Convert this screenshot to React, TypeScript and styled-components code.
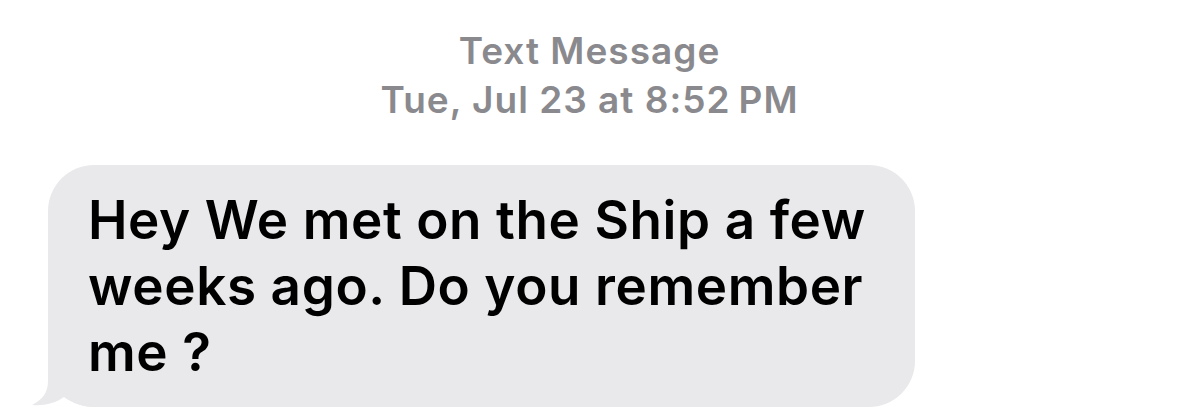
import React from "react"
import styled, { createGlobalStyle } from "styled-components"

const GlobalStyle = createGlobalStyle`
  html, body {
    margin: 0;
    padding: 0;
    background: #ffffff;
  }
  body {
    font-family: Inter, "Noto Sans", "Liberation Sans", sans-serif;
    -webkit-font-smoothing: antialiased;
  }
`

const Screen = styled.div`
  width: 1179px;
  height: 419px;
  overflow: hidden;
  display: flex;
  flex-direction: column;
`

const Header = styled.div`
  display: flex;
  flex-direction: column;
  align-items: center;
  padding-top: 26px;
  color: #8a8a8e;
  font-weight: 600;
  font-size: 37px;
  line-height: 49px;
  letter-spacing: 1px;
`

const HeaderLine = styled.div`
  white-space: nowrap;
`

const Time = styled.span`
  margin-left: 8px;
`

const Row = styled.div`
  display: flex;
  padding: 41px 0 0 48px;
`

const Bubble = styled.div`
  position: relative;
  width: 867px;
  box-sizing: border-box;
  background: #e9e9eb;
  border-radius: 46px;
  padding: 22px 40px 22px 40px;
  color: #000;
  font-weight: 600;
  font-size: 53px;
  line-height: 66px;
  letter-spacing: 0.6px;
`

const Message = styled.span`
  position: relative;
`

const Tail = styled.svg`
  position: absolute;
  left: -20px;
  bottom: 0;
`

const BubbleTail = () => (
  <Tail width="70" height="52" viewBox="0 0 70 52">
    <path
      d="M20 0 L20 26 C20 38 14 45 4 50 C16 51 28 48 36 42 C44 48 54 52 70 52 L70 0 Z"
      fill="#e9e9eb"
    />
  </Tail>
)

const App = () => {
  return (
    <Screen>
      <GlobalStyle />
      <Header>
        <HeaderLine>Text Message</HeaderLine>
        <HeaderLine>
          Tue, Jul 23 at 8:52<Time>PM</Time>
        </HeaderLine>
      </Header>
      <Row>
        <Bubble>
          <BubbleTail />
          <Message>Hey We met on the Ship a few weeks ago. Do you remember me ?</Message>
        </Bubble>
      </Row>
    </Screen>
  )
}

export default App
